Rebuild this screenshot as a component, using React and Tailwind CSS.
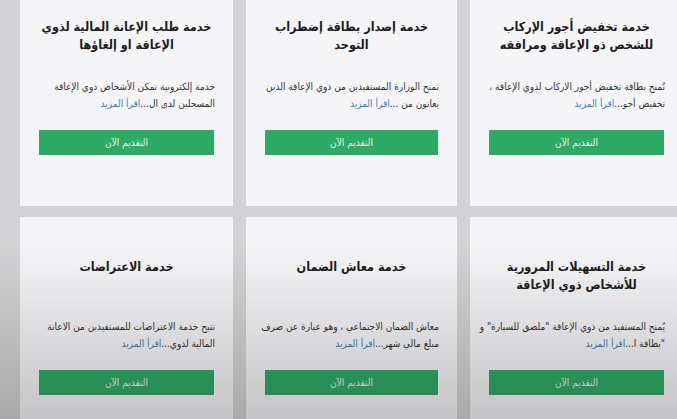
const services = [
    {
        title: ["خدمة تخفيض أجور الإركاب", "للشخص ذو الإعاقة ومرافقه"],
        desc: ["تُمنح بطاقة تخفيض أجور الاركاب لذوي الإعاقة ،", "تخفيض أجو..."],
    },
    {
        title: ["خدمة إصدار بطاقة إضطراب", "التوحد"],
        desc: ["تمنح الوزارة المستفيدين من ذوي الإعاقة الذين", "يعانون من ..."],
    },
    {
        title: ["خدمة طلب الإعانة المالية لذوي", "الإعاقة او إلغاؤها"],
        desc: ["خدمة إلكترونية تمكن الأشخاص ذوي الإعاقة", "المسجلين لدى ال..."],
    },
    {
        title: ["خدمة التسهيلات المرورية", "للأشخاص ذوي الإعاقة"],
        desc: ["يُمنح المستفيد من ذوي الإعاقة \"ملصق للسيارة\" و", "\"بطاقة ا..."],
    },
    {
        title: ["خدمة معاش الضمان"],
        desc: ["معاش الضمان الاجتماعي ، وهو عبارة عن صرف", "مبلغ مالي شهر..."],
    },
    {
        title: ["خدمة الاعتراضات"],
        desc: ["تتيح خدمة الاعتراضات للمستفيدين من الاعانة", "المالية لذوي..."],
    },
];

function ServiceCard({title, desc}) {
    return (
        <div className="h-[229px] bg-[#f5f4f7] flex flex-col pt-[41px] px-[18px]">
            <div className="h-[36px] text-center text-[12.5px] font-bold leading-[18px] text-[#1c1c1c]">
                {title.map((line) => (
                    <div key={line} className="whitespace-nowrap">{line}</div>
                ))}
            </div>
            <div className="mt-[24px] h-[34px] text-right text-[10px] leading-[17px] text-[#333]">
                <div className="whitespace-nowrap">{desc[0]}</div>
                <div className="whitespace-nowrap">
                    {desc[1]}
                    <a className="text-[#3b80b8]">اقرأ المزيد</a>
                </div>
            </div>
            <button className="mt-[18px] mx-[1px] h-[25px] bg-[#2faa66] text-[10px] text-white/85">
                التقديم الآن
            </button>
        </div>
    );
}

export default function App() {
    return (
        <div
            className="relative w-[677px] h-[419px] overflow-hidden bg-[#d3d3d5]"
            style={{fontFamily: '"DejaVu Sans Condensed", "DejaVu Sans", sans-serif'}}
        >
            <div
                dir="rtl"
                className="mt-[-23px] ml-[20px] w-[663px] grid grid-cols-[213px_211px_213px] gap-x-[13px] gap-y-[11px]"
            >
                {services.map((s) => (
                    <ServiceCard key={s.title[0]} {...s}/>
                ))}
            </div>
            {/* video vignette */}
            <div className="pointer-events-none absolute inset-0 bg-[linear-gradient(to_bottom,transparent_58%,rgba(0,0,0,0.2))]"/>
        </div>
    );
}
